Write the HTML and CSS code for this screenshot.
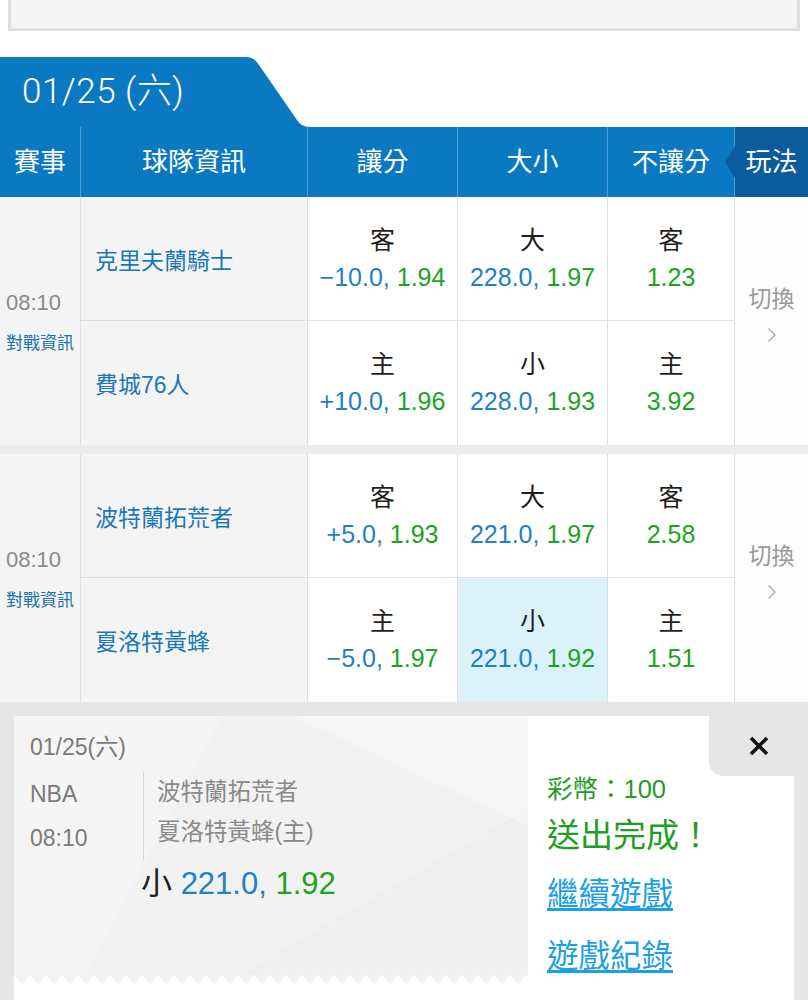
FILE: index.html
```html
<!DOCTYPE html>
<html lang="zh-Hant">
<head>
  <meta charset="UTF-8">
  <title>NBA 投注</title>
  <link rel="stylesheet" href="styles.css">
</head>
<body>
  <div class="top-box"></div>

  <div class="date-tab">
    <div class="date-label">01/25 (六)</div>
    <svg class="date-slant" width="70" height="70" viewBox="0 0 70 70">
      <path d="M0 0H6Q14 0 19 8L57 63Q61 70 70 70H0Z" fill="#0a79c2"/>
    </svg>
  </div>

  <div class="grid head">
    <div class="hcell">賽事</div>
    <div class="hcell">球隊資訊</div>
    <div class="hcell">讓分</div>
    <div class="hcell">大小</div>
    <div class="hcell">不讓分</div>
    <div class="hcell play">玩法</div>
  </div>

  <div class="grid match">
    <div class="c-time">
      <div class="time">08:10</div>
      <div class="info">對戰資訊</div>
    </div>
    <div class="c-team first">克里夫蘭騎士</div>
    <div class="c-odds first"><div class="lbl">客</div><div class="val"><span class="b">−10.0,</span> <span class="g">1.94</span></div></div>
    <div class="c-odds first"><div class="lbl">大</div><div class="val"><span class="b">228.0,</span> <span class="g">1.97</span></div></div>
    <div class="c-odds first"><div class="lbl">客</div><div class="val"><span class="g">1.23</span></div></div>
    <div class="c-switch">
      <div class="sw">切換</div>
      <svg width="10" height="16" viewBox="0 0 10 16"><path d="M1.5 1.5L8 8L1.5 14.5" fill="none" stroke="#aaa" stroke-width="1.4"/></svg>
    </div>
    <div class="c-team">費城76人</div>
    <div class="c-odds"><div class="lbl">主</div><div class="val"><span class="b">+10.0,</span> <span class="g">1.96</span></div></div>
    <div class="c-odds"><div class="lbl">小</div><div class="val"><span class="b">228.0,</span> <span class="g">1.93</span></div></div>
    <div class="c-odds"><div class="lbl">主</div><div class="val"><span class="g">3.92</span></div></div>
  </div>

  <div class="grid match">
    <div class="c-time">
      <div class="time">08:10</div>
      <div class="info">對戰資訊</div>
    </div>
    <div class="c-team first">波特蘭拓荒者</div>
    <div class="c-odds first"><div class="lbl">客</div><div class="val"><span class="b">+5.0,</span> <span class="g">1.93</span></div></div>
    <div class="c-odds first"><div class="lbl">大</div><div class="val"><span class="b">221.0,</span> <span class="g">1.97</span></div></div>
    <div class="c-odds first"><div class="lbl">客</div><div class="val"><span class="g">2.58</span></div></div>
    <div class="c-switch">
      <div class="sw">切換</div>
      <svg width="10" height="16" viewBox="0 0 10 16"><path d="M1.5 1.5L8 8L1.5 14.5" fill="none" stroke="#aaa" stroke-width="1.4"/></svg>
    </div>
    <div class="c-team">夏洛特黃蜂</div>
    <div class="c-odds"><div class="lbl">主</div><div class="val"><span class="b">−5.0,</span> <span class="g">1.97</span></div></div>
    <div class="c-odds picked"><div class="lbl">小</div><div class="val"><span class="b">221.0,</span> <span class="g">1.92</span></div></div>
    <div class="c-odds"><div class="lbl">主</div><div class="val"><span class="g">1.51</span></div></div>
  </div>

  <div class="overlay">
    <div class="sheet">
      <div class="ticket-wrap">
        <div class="ticket">
          <div class="t-date">01/25(六)</div>
          <div class="t-body">
            <div class="t-left">
              <div>NBA</div>
              <div>08:10</div>
            </div>
            <div class="t-teams">
              <div>波特蘭拓荒者</div>
              <div>夏洛特黃蜂(主)</div>
            </div>
          </div>
          <div class="t-pick">小 <span class="b">221.0,</span> <span class="g">1.92</span></div>
        </div>
        <svg class="zigzag" width="514" height="9">
          <defs>
            <pattern id="zz" width="16" height="9" patternUnits="userSpaceOnUse">
              <path d="M0 0H16L8 9Z" fill="#f2f2f2"/>
            </pattern>
          </defs>
          <rect width="514" height="9" fill="url(#zz)"/>
        </svg>
      </div>
      <div class="result">
        <div class="coins">彩幣：100</div>
        <div class="done">送出完成！</div>
        <a class="link" href="#">繼續遊戲</a>
        <a class="link second" href="#">遊戲紀錄</a>
      </div>
    </div>
    <div class="close">
      <svg width="20" height="20" viewBox="0 0 20 20"><path d="M2 2L18 18M18 2L2 18" stroke="#111" stroke-width="3.6"/></svg>
    </div>
  </div>
</body>
</html>
```

FILE: styles.css
```css
* {
  box-sizing: border-box;
}
body {
  margin: 0;
  background: #fff;
  font-family: "Liberation Sans", "Noto Sans CJK TC", sans-serif;
  color: #222;
}
.top-box {
  margin: 0 8px;
  height: 31px;
  background: #f5f5f5;
  border: 3px solid #dfdfdf;
  border-top: none;
}

/* date tab */
.date-tab {
  display: flex;
  margin-top: 26px;
  height: 70px;
}
.date-label {
  width: 240px;
  background: #0a79c2;
  color: #fff;
  font-family: Roboto, "Noto Sans CJK TC", sans-serif;
  font-weight: 300;
  font-size: 35px;
  line-height: 70px;
  padding-left: 22px;
  letter-spacing: 0.5px;
}
.date-slant {
  display: block;
}

/* table */
.grid {
  display: grid;
  grid-template-columns: 81px 227px 150px 150px 127px 73px;
}
.head {
  height: 70px;
  background: #0a79c2;
}
.hcell {
  color: #fff;
  font-size: 26px;
  line-height: 70px;
  text-align: center;
  border-right: 1px solid #4a9fd7;
}
.hcell.play {
  position: relative;
  background: #0b5b9d;
  border-right: none;
}
.hcell.play::before {
  content: "";
  position: absolute;
  left: -10px;
  top: 19px;
  border-top: 16px solid transparent;
  border-bottom: 16px solid transparent;
  border-right: 10px solid #0b5b9d;
}

.match {
  grid-template-rows: 124px 124px;
}
.match + .match {
  border-top: 9px solid #ececec;
}
.c-time {
  grid-row: span 2;
  background: #f4f4f4;
  border-right: 1px solid #d8e1e9;
  display: flex;
  flex-direction: column;
  justify-content: center;
  padding-left: 6px;
}
.time {
  font-size: 22px;
  line-height: 30px;
  color: #8a8a8a;
}
.info {
  margin-top: 15px;
  font-size: 17px;
  line-height: 22px;
  color: #1b70b0;
}
.c-team {
  background: #f4f4f4;
  border-right: 1px solid #d8e1e9;
  display: flex;
  align-items: center;
  padding-left: 14px;
  font-size: 23px;
  color: #1b78b6;
}
.c-odds {
  background: #fff;
  border-right: 1px solid #d8e1e9;
  display: flex;
  flex-direction: column;
  justify-content: center;
  text-align: center;
}
.first {
  border-bottom: 1px solid #d8e1e9;
}
.c-odds.picked {
  background: #dcf2fb;
}
.lbl {
  font-size: 25px;
  line-height: 37px;
  color: #1e1e1e;
}
.val {
  font-size: 25px;
  line-height: 37px;
  white-space: nowrap;
}
.b {
  color: #1f80c6;
}
.g {
  color: #1ca323;
}
.c-switch {
  grid-column: 6;
  grid-row: span 2;
  background: #fdfdfd;
  display: flex;
  flex-direction: column;
  align-items: center;
  justify-content: center;
  padding-bottom: 15px;
}
.sw {
  font-size: 23px;
  line-height: 30px;
  color: #9a9a9a;
}
.c-switch svg {
  margin-top: 13px;
}

/* confirm sheet */
.overlay {
  position: relative;
  background: #e6e6e6;
  padding: 14px 14px 0;
  height: 300px;
}
.sheet {
  display: flex;
  background: #fff;
  height: 286px;
}
.ticket-wrap {
  width: 514px;
}
.ticket {
  height: 259px;
  padding: 16px 0 0 16px;
  background-color: #f2f2f2;
  background-image:
    linear-gradient(118deg, rgba(255,255,255,0.25) 0 32%, transparent 32%),
    linear-gradient(205deg, rgba(255,255,255,0.3) 0 22%, transparent 22%),
    linear-gradient(330deg, rgba(0,0,0,0.01) 0 30%, transparent 30%);
}
.zigzag {
  display: block;
}
.t-date {
  font-size: 23px;
  line-height: 30px;
  color: #7a7a7a;
}
.t-body {
  display: flex;
  margin-top: 10px;
}
.t-left {
  width: 113px;
  font-size: 23px;
  line-height: 44px;
  color: #7a7a7a;
}
.t-teams {
  border-left: 1px solid #d9d9d9;
  padding-left: 13px;
  font-size: 23.5px;
  line-height: 40px;
  color: #8a8a8a;
}
.t-pick {
  margin: 4px 0 0 111px;
  font-size: 31px;
  line-height: 40px;
  color: #1e1e1e;
}
.result {
  flex: 1;
  padding: 56px 0 0 19px;
}
.coins {
  font-size: 25.5px;
  line-height: 34px;
  color: #1f9e23;
}
.done {
  font-size: 33px;
  line-height: 60px;
  color: #1f9e23;
}
.link {
  display: block;
  width: max-content;
  font-size: 31.5px;
  line-height: 56px;
  color: #1d9fe6;
  text-decoration: underline;
  text-underline-offset: 3px;
}
.link.second {
  margin-top: 6px;
}
.close {
  position: absolute;
  top: 14px;
  right: 0;
  width: 99px;
  height: 60px;
  background: #e6e6e6;
  border-bottom-left-radius: 14px;
  display: flex;
  align-items: center;
  justify-content: center;
}
.close svg {
  display: block;
}
```
